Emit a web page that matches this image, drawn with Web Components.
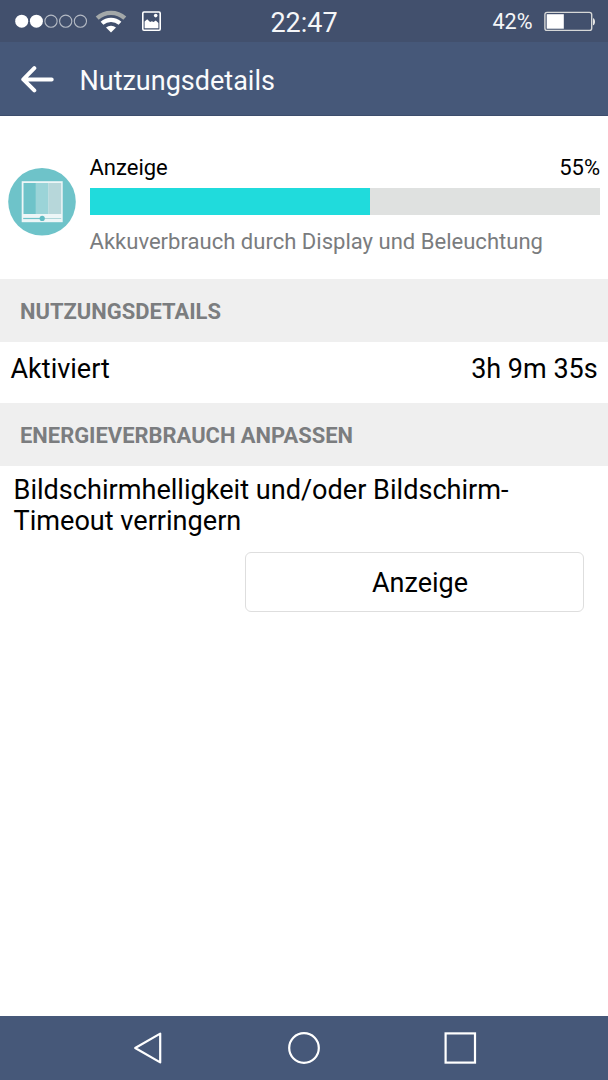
<!DOCTYPE html>
<html lang="de">
<head>
<meta charset="utf-8">
<title>Nutzungsdetails</title>
<style>
html,body{margin:0;height:100%;overflow:hidden}
body{background:#fff;color:#000;font-family:Roboto,sans-serif}
</style>
</head>
<body>
<usage-screen></usage-screen>
<script>
const define = (name, html) => {
  const tpl = document.createElement('template');
  tpl.innerHTML = html;
  customElements.define(name, class extends HTMLElement {
    constructor() {
      super();
      this.attachShadow({ mode: 'open' }).append(tpl.content.cloneNode(true));
    }
  });
};

define('signal-icons', `
<style>:host{display:block;height:42px}svg{display:block}</style>
<svg width="170" height="42" viewBox="0 0 170 42" fill="none">
  <ellipse cx="21.7" cy="21.2" rx="6.5" ry="6.5" fill="#fff"/><ellipse cx="36.4" cy="21.2" rx="6.5" ry="6.5" fill="#fff"/>
  <g stroke="#b4bac4" stroke-width="1.1"><circle cx="51" cy="21.2" r="6.1"/><circle cx="65.7" cy="21.2" r="6.1"/><circle cx="80.4" cy="21.2" r="6.1"/></g>
  <path d="M97.2 18.2a20.5 20.5 0 0 1 27.6 0" stroke="#a3a8a9" stroke-width="4.4"/>
  <path d="M102 23.3a13.6 13.6 0 0 1 18 0" stroke="#fff" stroke-width="4.2"/>
  <path d="M111 32.6l-5-5a7.4 7.4 0 0 1 10 0z" fill="#fff"/>
  <rect x="142.8" y="12" width="17.4" height="18.2" rx="1.2" stroke="#fff" stroke-width="1.6"/>
  <path d="M144.6 28.2v-6.6l2.6-2.4 2.9 2.9 1.8-.9 1.6.7 2.3-1.5 2.6 2.6v5.2z" fill="#fff"/>
  <circle cx="155.7" cy="15.6" r="1.8" fill="#fff"/>
</svg>`);

define('battery-icon', `
<style>:host{display:block}svg{display:block}</style>
<svg width="54" height="42" viewBox="0 0 54 42" fill="none">
  <rect x="1.9" y="12.4" width="46.8" height="18" rx="2.2" stroke="#d6d7d7" stroke-width="1.4"/>
  <rect x="3.7" y="14.2" width="17.1" height="14.5" fill="#fff"/>
  <path d="M50 18.2c2.7.2 2.7 6.8 0 7z" fill="#e6e6e6"/>
</svg>`);

define('status-bar', `
<style>
:host{display:grid;grid-template-columns:1fr auto 1fr;height:42px;background:#42506d;color:#f5f6f8;align-items:center}
.time{font-size:27px;line-height:32px;padding-top:3px}
.right{display:flex;justify-content:flex-end;align-items:center;padding-right:11px}
.level{font-size:21.6px;line-height:26px;padding:2px 10.5px 0 0}
</style>
<signal-icons></signal-icons><div class="time">22:47</div>
<div class="right"><span class="level">42%</span><battery-icon></battery-icon></div>`);

define('app-bar', `
<style>
:host{display:flex;box-sizing:border-box;height:74px;background:#465879;color:#fafbfc;align-items:center;padding-left:20px;border-bottom:1px solid #3d4d6c}
h1{margin:0 0 0 25.5px;font-size:27px;line-height:32px;font-weight:400;padding-top:4px}
svg{display:block;margin-top:2px}
</style>
<svg width="34" height="28" viewBox="20 66 34 28" fill="none" stroke="#fff" stroke-width="4" stroke-linecap="round" stroke-linejoin="round"><path d="M34.3 68.2L23.3 79.4l11 11M24 79.4h27.7"/></svg>
<h1><slot></slot></h1>`);

define('display-icon', `
<style>:host{display:block}svg{display:block}</style>
<svg width="68" height="68" viewBox="0 0 68 68">
  <circle cx="34" cy="33.8" r="33.8" fill="#6ec3c9"/>
  <rect x="13.7" y="13.2" width="41" height="41" fill="#edf6f7"/>
  <path fill="#6ec3c9" d="M15.5 15h12.4v31H15.5z"/><path fill="#9bd4d8" d="M27.9 15h12.6v31H27.9z"/><path fill="#b7d7da" d="M40.5 15h12.7v31H40.5z"/>
  <path d="M15.2 50.5h19" stroke="#6ec3c9" stroke-width="1.2"/><path d="M34 50.5h19.2" stroke="#afd7da" stroke-width="1"/>
  <circle cx="34.2" cy="50.4" r="2.6" fill="#61bcc3"/>
</svg>`);

define('usage-bar', `
<style>
:host{display:block;height:27px;background:#dfe1e0}
div{width:55%;height:100%;background:#20dbdc}
</style><div></div>`);

define('usage-summary', `
<style>
:host{display:flex;box-sizing:border-box;height:162.6px;padding:38px 8.3px 0 8px}
display-icon{margin-top:14px}
.info{flex:1;margin-left:13.5px}
.head{display:flex;justify-content:space-between;font-size:22px;line-height:28px;margin:0 -.3px 6px 0}
.desc{font-size:22.05px;line-height:28px;color:#7a7c7e;margin-top:13px;white-space:nowrap}
</style>
<display-icon></display-icon>
<div class="info">
  <div class="head"><slot name="name"></slot><slot name="percent"></slot></div>
  <usage-bar></usage-bar>
  <div class="desc"><slot></slot></div>
</div>`);

define('section-header', `
<style>
:host{display:flex;box-sizing:border-box;height:63.4px;align-items:center;background:#efefef;padding:2.6px 20px 0;color:#7b7d7f}
h2{margin:0;font-size:21.93px;line-height:28px;font-weight:700}
</style><h2><slot></slot></h2>`);

define('detail-row', `
<style>
:host{display:flex;box-sizing:border-box;height:60.6px;padding:11px 10.3px 0 10.5px;justify-content:space-between;font-size:27px;line-height:32px}
</style><slot name="label"></slot><slot name="value"></slot>`);

define('power-tip', `
<style>
:host{display:block;padding:9px 13.5px 0}
p{margin:0;font-size:27.1px;line-height:31px}
</style><p><slot></slot></p>`);

define('outline-button', `
<style>
:host{display:block;margin:15px 24px 0 245px}
button{box-sizing:border-box;display:flex;width:100%;height:60px;align-items:center;justify-content:center;background:#fff;border:1.5px solid #dedede;border-radius:6px;padding:2px 0 0 11px;font:400 27px/32px Roboto,sans-serif;color:#000}
</style><button><slot></slot></button>`);

define('nav-bar', `
<style>
:host{display:grid;grid-template-columns:repeat(3,156.4px);justify-content:center;box-sizing:border-box;height:64px;background:#465879;align-items:center;justify-items:center}
svg{display:block}
</style>
<svg width="34" height="34" viewBox="0 0 34 34" fill="none" stroke="#fff" stroke-width="2.2" stroke-linejoin="round"><path d="M4.2 17L29.2 2.6v28.8z"/></svg>
<svg width="34" height="34" viewBox="0 0 34 34" fill="none" stroke="#fff" stroke-width="2.2"><circle cx="17" cy="17" r="14.8"/></svg>
<svg width="34" height="34" viewBox="0 0 34 34" fill="none" stroke="#fff" stroke-width="2.2"><rect x="2.6" y="2.4" width="29.4" height="29.2"/></svg>`);

define('usage-screen', `
<style>
:host{display:flex;flex-direction:column;width:608px;height:1080px;background:#fff}
main{flex:1}
</style>
<status-bar></status-bar>
<app-bar>Nutzungsdetails</app-bar>
<main>
  <usage-summary><span slot="name">Anzeige</span><span slot="percent">55%</span>Akkuverbrauch durch Display und Beleuchtung</usage-summary>
  <section-header>NUTZUNGSDETAILS</section-header>
  <detail-row><span slot="label">Aktiviert</span><span slot="value">3h 9m 35s</span></detail-row>
  <section-header>ENERGIEVERBRAUCH ANPASSEN</section-header>
  <power-tip>Bildschirmhelligkeit und/oder Bildschirm-<br>Timeout verringern</power-tip>
  <outline-button>Anzeige</outline-button>
</main>
<nav-bar></nav-bar>`);
</script>
</body>
</html>
